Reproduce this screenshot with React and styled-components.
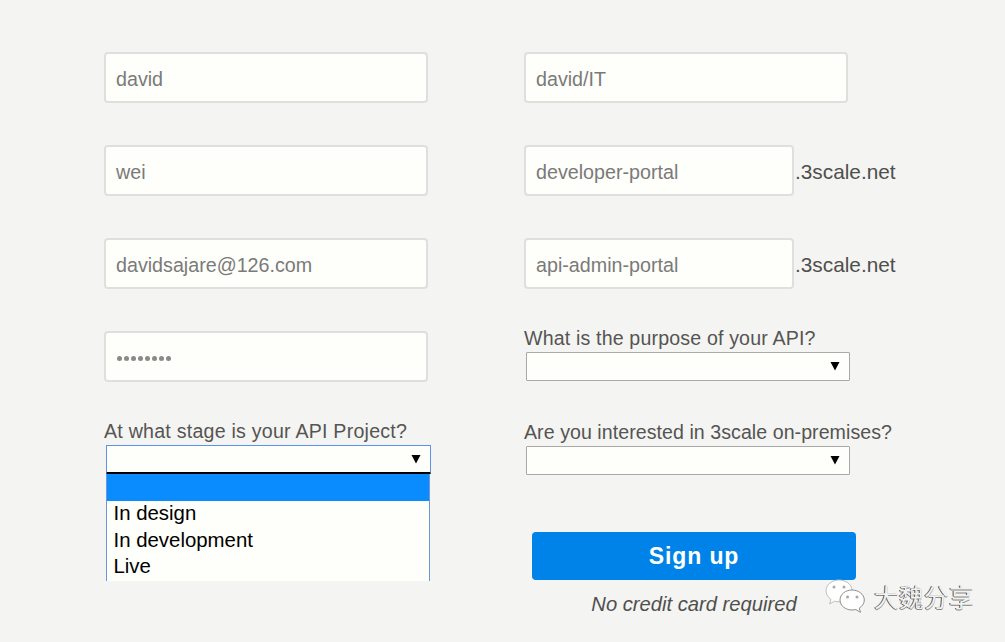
import React from "react";
import styled, { createGlobalStyle } from "styled-components";

const Global = createGlobalStyle`
  html, body { margin: 0; padding: 0; background: #f4f4f2; }
  body { font-family: "Liberation Sans", Arial, sans-serif; }
`;

const Page = styled.div`
  position: relative;
  width: 1005px;
  height: 642px;
  overflow: hidden;
  background: #f4f4f2;
  box-sizing: border-box;
  padding: 52px 0 0 104px;
  display: grid;
  grid-template-columns: 420px 481px;
  align-items: start;
`;

const Column = styled.div`
  display: flex;
  flex-direction: column;
  align-items: flex-start;
`;

const Row = styled.div`
  display: flex;
  align-items: center;
  height: 51px;
  margin-bottom: 42px;
`;

const Input = styled.div`
  box-sizing: border-box;
  width: ${(p) => p.$width}px;
  height: 51px;
  padding: 4px 10px 0;
  display: flex;
  align-items: center;
  background: #fefefb;
  border: 2px solid #dfdfdd;
  border-radius: 4px;
  font-size: 19.7px;
  color: #7a7a78;
  white-space: nowrap;
`;

const Dots = styled.span`
  display: flex;
  gap: 2px;
  margin: 0 0 0 1px;
`;

const Dot = styled.i`
  display: block;
  width: 5px;
  height: 5px;
  border-radius: 50%;
  background: #8a8a88;
`;

const Suffix = styled.span`
  font-size: 20.8px;
  color: #4f4f4d;
  margin: 2px 0 0 1px;
`;

const Field = styled.div`
  position: relative;
  margin-top: ${(p) => p.$top}px;
`;

const Label = styled.div`
  font-size: 19.6px;
  line-height: 22px;
  color: #555553;
  white-space: nowrap;
  letter-spacing: ${(p) => p.$spacing}px;
`;

const Select = styled.div`
  box-sizing: border-box;
  position: relative;
  width: ${(p) => (p.$open ? 325 : 324)}px;
  height: 29px;
  margin: 3px 0 0 2px;
  background: #fefefb;
  border: 1px solid ${(p) => (p.$open ? "#5b93e6" : "#a9a9a7")};
  ${(p) => p.$open && "border-bottom: 2px solid #000;"}
  border-radius: 1px;
`;

const Arrow = styled.svg`
  position: absolute;
  right: 9px;
  top: 8px;
  width: 10px;
  height: 10px;
`;

const Menu = styled.div`
  position: absolute;
  left: 2px;
  top: 54px;
  width: 324px;
  height: 107px;
  box-sizing: border-box;
  background: #fefefb;
  border-left: 1px solid #6f97d8;
  border-right: 1px solid #6f97d8;
  overflow: hidden;
`;

const Option = styled.div`
  box-sizing: border-box;
  height: ${(p) => (p.$active ? 27 : 26.5)}px;
  line-height: 25px;
  padding-left: 6.500px;
  font-size: 20.4px;
  color: #000;
  background: ${(p) => (p.$active ? "#0a8cff" : "transparent")};
`;

const Submit = styled.button`
  display: block;
  width: 324px;
  height: 48px;
  margin: 57px 0 0 8px;
  padding: 0;
  border: 0;
  border-radius: 4px;
  background: #0083e8;
  color: #fff;
  font-family: inherit;
  font-size: 23px;
  font-weight: 700;
  letter-spacing: 0.9px;
`;

const Note = styled.div`
  width: 324px;
  margin: 13px 0 0 8px;
  text-align: center;
  font-size: 20.2px;
  line-height: 22px;
  font-style: italic;
  color: #4f4f4d;
`;

const Watermark = styled.div`
  position: absolute;
  left: 825px;
  top: 578px;
  display: flex;
  align-items: center;
  gap: 8px;
`;

const WatermarkText = styled.span`
  font-family: "Noto Sans CJK SC", sans-serif;
  font-size: 24.5px;
  line-height: 38px;
  letter-spacing: 0.5px;
  color: #f2f2f0;
  text-shadow: -1px 0 0 #4a4a4a, 0 1px 0 #8a8a8a;
`;

const ArrowIcon = () => (
  <Arrow viewBox="0 0 10 10">
    <path d="M0.500 1h9L5 9.500z" fill="#000" />
  </Arrow>
);

const Logo = () => (
  <svg width="41" height="36" viewBox="0 0 41 36">
    <path
      d="M14 1C6.8 1 1 5.800 1 11.800c0 3.500 2 6.600 5 8.600L4.600 25l5-2.800c1.400.4 2.900.6 4.400.6 7.200 0 13-4.800 13-11S21.200 1 14 1z"
      fill="#fff"
      stroke="#bdbdbb"
    />
    <path
      d="M27 11c-6.500 0-12 4.300-12 10s5.500 10 12 10c1.300 0 2.600-.2 3.800-.5l4.700 2.900-1.200-4.300c3-1.900 5-4.800 5-8.100 0-5.700-5.800-10-12.300-10z"
      fill="#fff"
      stroke="#8e8e8c"
    />
    <circle cx="9" cy="8" r="1.500" fill="#a8a8a6" />
    <circle cx="19" cy="8" r="1.500" fill="#a8a8a6" />
    <circle cx="22.500" cy="18" r="1.500" fill="#a8a8a6" />
    <circle cx="32" cy="18" r="1.500" fill="#a8a8a6" />
  </svg>
);

export default function App() {
  return (
    <Page>
      <Global />
      <Column>
        <Row><Input $width={324}>david</Input></Row>
        <Row><Input $width={324}>wei</Input></Row>
        <Row><Input $width={324}>davidsajare@126.com</Input></Row>
        <Row>
          <Input $width={324}>
            <Dots>{Array.from({ length: 8 }, (_, i) => <Dot key={i} />)}</Dots>
          </Input>
        </Row>
        <Field $top={-4}>
          <Label $spacing={0.235}>At what stage is your API Project?</Label>
          <Select $open><ArrowIcon /></Select>
          <Menu>
            <Option $active />
            <Option>In design</Option>
            <Option>In development</Option>
            <Option>Live</Option>
          </Menu>
        </Field>
      </Column>
      <Column>
        <Row><Input $width={324}>david/IT</Input></Row>
        <Row>
          <Input $width={270}>developer-portal</Input>
          <Suffix>.3scale.net</Suffix>
        </Row>
        <Row>
          <Input $width={270}>api-admin-portal</Input>
          <Suffix>.3scale.net</Suffix>
        </Row>
        <Field $top={-4}>
          <Label $spacing={0.16}>What is the purpose of your API?</Label>
          <Select><ArrowIcon /></Select>
        </Field>
        <Field $top={40}>
          <Label $spacing={0.05}>Are you interested in 3scale on-premises?</Label>
          <Select><ArrowIcon /></Select>
        </Field>
        <Submit>Sign up</Submit>
        <Note>No credit card required</Note>
      </Column>
      <Watermark>
        <Logo />
        <WatermarkText>大魏分享</WatermarkText>
      </Watermark>
    </Page>
  );
}
